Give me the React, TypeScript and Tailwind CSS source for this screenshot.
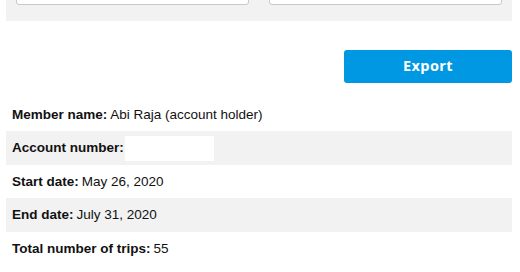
import React from "react";

const rows: { label: string; value?: string; box?: boolean; gray: boolean }[] = [
  { label: "Member name:", value: "Abi Raja (account holder)", gray: false },
  { label: "Account number:", box: true, gray: true },
  { label: "Start date:", value: "May 26, 2020", gray: false },
  { label: "End date:", value: "July 31, 2020", gray: true },
  { label: "Total number of trips:", value: "55", gray: false },
];

export default function App() {
  return (
    <div className="w-[520px] h-[272px] bg-white overflow-hidden px-[6px] pr-[8px]" style={{ fontFamily: '"Liberation Sans", Arial, sans-serif' }}>
      <div className="h-[21px] bg-[#f2f2f2] overflow-hidden flex items-end gap-[20px] px-[10px] pb-[16px]">
        <div className="flex-1 h-[36px] shrink-0 bg-white border border-[#c9c9c9] rounded-[3px]" />
        <div className="flex-1 h-[36px] shrink-0 bg-white border border-[#c9c9c9] rounded-[3px]" />
      </div>
      <div className="flex justify-end mt-[29px]">
        <button
          className="w-[168px] h-[33px] bg-[#0098e3] rounded-[3px] text-white text-[14.5px] font-bold tracking-[0.4px] flex items-center justify-center pb-[1px]"
          style={{ fontFamily: '"Open Sans", sans-serif' }}
        >
          Export
        </button>
      </div>
      <div className="mt-[14.5px] flex flex-col">
        {rows.map((r) => (
          <div
            key={r.label}
            className={`h-[33.5px] flex items-center px-[6px] pt-[1px] text-[13.5px] text-[#111] ${r.gray ? "bg-[#f2f2f2]" : ""}`}
          >
            <span className="font-bold">{r.label}</span>
            {r.value ? <span className="ml-[3px]">{r.value}</span> : null}
            {r.box ? <span className="ml-[1px] w-[89px] h-[25px] bg-white inline-block" /> : null}
          </div>
        ))}
      </div>
    </div>
  );
}
